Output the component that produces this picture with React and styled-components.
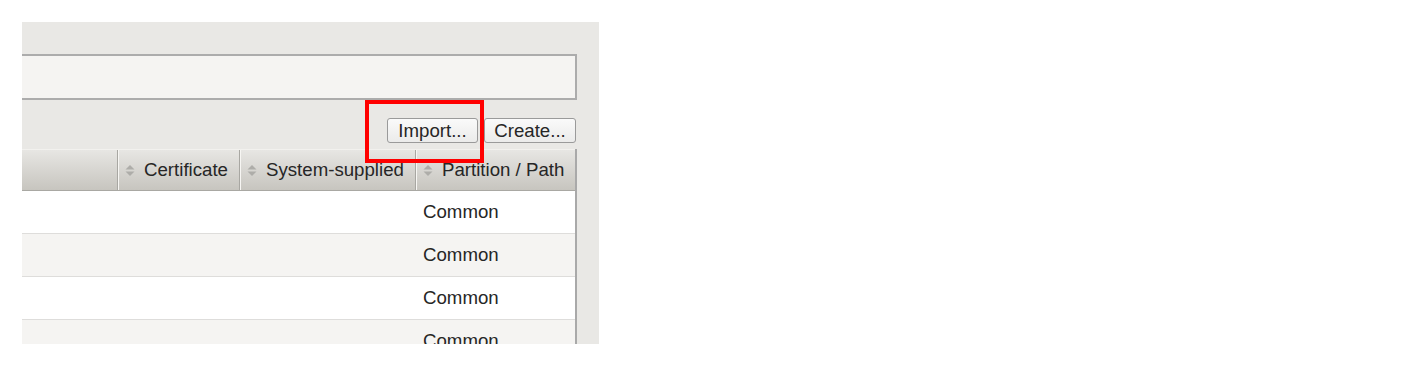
import React from "react";
import styled, { createGlobalStyle } from "styled-components";

const Global = createGlobalStyle`
  html, body { margin: 0; padding: 0; background: #ffffff; }
  body { font-family: "Liberation Sans", Arial, sans-serif; }
`;

const Page = styled.div`
  padding: 22px;
  width: 1418px;
  height: 366px;
  box-sizing: border-box;
`;

const Panel = styled.div`
  position: relative;
  width: 577px;
  height: 322px;
  overflow: hidden;
  background: #e9e8e5;
  box-sizing: border-box;
  padding: 32px 22px 0 0;
  display: flex;
  flex-direction: column;
  font-size: 18.67px;
  color: #262626;
  & > * { flex-shrink: 0; }
`;

const FilterBox = styled.div`
  height: 46px;
  box-sizing: border-box;
  background: #f5f4f2;
  border-top: 2px solid #acacac;
  border-bottom: 2px solid #acacac;
  border-right: 2px solid #acacac;
`;

const Toolbar = styled.div`
  display: flex;
  justify-content: flex-end;
  gap: 6px;
  margin-top: 18px;
  margin-bottom: 6px;
  padding-right: 1px;
`;

const Button = styled.button`
  height: 25px;
  width: ${(p) => p.$w}px;
  box-sizing: border-box;
  border: 1px solid #9a9a9a;
  border-radius: 3px;
  background: linear-gradient(#fafafa, #ebebea);
  font-family: "Liberation Sans", Arial, sans-serif;
  font-size: 18.67px;
  color: #262626;
  padding: 0;
  line-height: 22px;
  cursor: pointer;
`;

const Table = styled.div`
  border-right: 2px solid #a9a9a9;
  display: flex;
  flex-direction: column;
  & > * { flex-shrink: 0; }
`;

const Row = styled.div`
  display: grid;
  grid-template-columns: 95px 122px 176px 160px;
  height: ${(p) => (p.$head ? 42 : 43)}px;
  box-sizing: border-box;
  border-bottom: 1px solid ${(p) => (p.$head ? "#a9a8a3" : "#dedddb")};
  background: ${(p) =>
    p.$head
      ? "linear-gradient(#e7e6e3, #c7c5bf)"
      : p.$alt
      ? "#f5f4f2"
      : "#ffffff"};
  border-top: ${(p) => (p.$head ? "1px solid #f2f1ee" : "none")};
`;

const HeadCell = styled.div`
  display: flex;
  align-items: center;
  gap: 9px;
  padding-left: 7px;
  box-sizing: border-box;
  border-left: ${(p) => (p.$first ? "none" : "1px solid #a8a7a2")};
  box-shadow: ${(p) => (p.$first ? "none" : "inset 1px 0 0 #f7f6f3")};
  white-space: nowrap;
`;

const Cell = styled.div`
  display: flex;
  align-items: center;
  padding-left: 8px;
  white-space: nowrap;
`;

const Highlight = styled.div`
  position: absolute;
  left: 343px;
  top: 78px;
  width: 119px;
  height: 63px;
  box-sizing: border-box;
  border: 4px solid #ff0000;
  pointer-events: none;
`;

const SortIcon = () => (
  <svg width="10" height="13" viewBox="0 0 10 13">
    <path d="M0.5 5.5 L5 1 L9.5 5.5 Z" fill="#aeada9" />
    <path d="M0.5 7.5 L5 12 L9.5 7.5 Z" fill="#aeada9" />
  </svg>
);

const rows = [0, 1, 2, 3];

export default function App() {
  return (
    <>
      <Global />
      <Page>
        <Panel>
          <FilterBox />
          <Toolbar>
            <Button $w={91}>Import...</Button>
            <Button $w={92}>Create...</Button>
          </Toolbar>
          <Table>
            <Row $head>
              <HeadCell $first />
              <HeadCell>
                <SortIcon />
                Certificate
              </HeadCell>
              <HeadCell>
                <SortIcon />
                System-supplied
              </HeadCell>
              <HeadCell>
                <SortIcon />
                Partition / Path
              </HeadCell>
            </Row>
            {rows.map((i) => (
              <Row key={i} $alt={i % 2 === 1}>
                <Cell />
                <Cell />
                <Cell />
                <Cell>Common</Cell>
              </Row>
            ))}
          </Table>
          <Highlight />
        </Panel>
      </Page>
    </>
  );
}
